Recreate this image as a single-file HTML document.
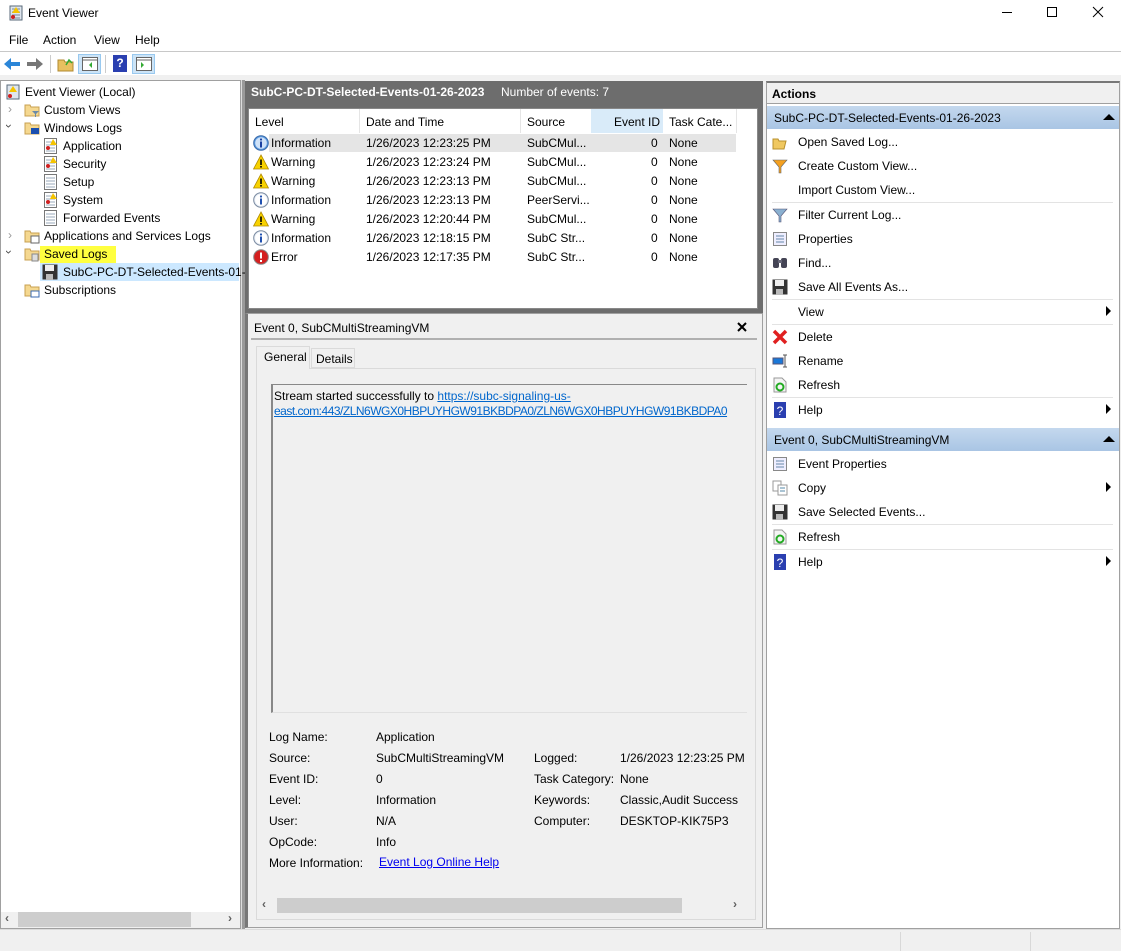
<!DOCTYPE html>
<html><head><meta charset="utf-8"><style>
*{margin:0;padding:0;box-sizing:border-box}
body{width:1121px;height:951px;position:relative;background:#f0f0f0;font-family:"Liberation Sans",Arial,sans-serif;font-size:12px;color:#000;overflow:hidden}
.a{position:absolute;white-space:nowrap}
.ic{position:absolute;width:16px;height:16px}
.sep{position:absolute;height:1px;background:#e3e3e3;left:772px;width:341px}
.arr{position:absolute;width:0;height:0;border-top:5px solid transparent;border-bottom:5px solid transparent;border-left:5px solid #000}
.lnk{color:#0066cc;text-decoration:underline}
</style></head><body>
<!-- title bar -->
<div class="a" style="left:0;top:0;width:1121px;height:51px;background:#fff"></div>
<svg class="ic" style="left:8px;top:5px" viewBox="0 0 16 16"><rect x="2" y="1" width="12" height="14" fill="#dfe6ee" stroke="#5a6a7a"/><path d="M4 4h8M4 7h8M4 10h8M4 13h8" stroke="#7a8a9a"/><path d="M8 2l4 6H4z" fill="#f5c400"/><circle cx="5" cy="12" r="2" fill="#d02020"/></svg>
<div class="a" style="left:28px;top:6px;font-size:12px">Event Viewer</div>
<div class="a" style="left:1002px;top:12px;width:10px;height:1px;background:#000"></div>
<div class="a" style="left:1047px;top:7px;width:10px;height:10px;border:1px solid #000"></div>
<svg class="a" style="left:1092px;top:6px" width="12" height="12"><path d="M1 1L11 11M11 1L1 11" stroke="#000"/></svg>
<div class="a" style="left:9px;top:33px">File</div>
<div class="a" style="left:43px;top:33px">Action</div>
<div class="a" style="left:94px;top:33px">View</div>
<div class="a" style="left:135px;top:33px">Help</div>
<div class="a" style="left:0;top:51px;width:1121px;height:1px;background:#c8c8c8"></div>
<!-- toolbar -->
<div class="a" style="left:0;top:52px;width:1121px;height:23px;background:#fff"></div>
<svg class="a" style="left:3px;top:56px" width="18" height="16"><path d="M1 8l7-6v4h9v4H8v4z" fill="#2b86d8"/></svg>
<svg class="a" style="left:26px;top:56px" width="18" height="16"><path d="M17 8l-7-6v4H1v4h9v4z" fill="#777"/></svg>
<div class="a" style="left:50px;top:55px;width:1px;height:18px;background:#ccc"></div>
<svg class="a" style="left:57px;top:56px" width="17" height="16"><path d="M1 4h6l1 2h8v9H1z" fill="#e8c060" stroke="#b08a30"/><path d="M9 9l3-5 3 3" stroke="#3a3" fill="none" stroke-width="1.5"/></svg>
<div class="a" style="left:78px;top:54px;width:23px;height:20px;background:#cce4f7;border:1px solid #99c9ef"></div>
<svg class="a" style="left:82px;top:57px" width="16" height="14"><rect x="0.5" y="0.5" width="15" height="13" fill="#fff" stroke="#666"/><path d="M1 3h14" stroke="#666"/><path d="M10 5l-3 3 3 3z" fill="#3a3"/></svg>
<div class="a" style="left:105px;top:55px;width:1px;height:18px;background:#ccc"></div>
<div class="a" style="left:113px;top:55px;width:14px;height:17px;background:#2a3fb0;color:#fff;font-weight:bold;text-align:center;line-height:17px">?</div>
<div class="a" style="left:132px;top:54px;width:23px;height:20px;background:#cce4f7;border:1px solid #99c9ef"></div>
<svg class="a" style="left:136px;top:57px" width="16" height="14"><rect x="0.5" y="0.5" width="15" height="13" fill="#fff" stroke="#666"/><path d="M1 3h14" stroke="#666"/><path d="M5 5l3 3-3 3z" fill="#3a3"/></svg>

<!-- left panel -->
<div class="a" style="left:0;top:80px;width:241px;height:849px;background:#fff;border:1px solid #a0a0a0"></div>
<div class="a" style="left:1px;top:912px;width:239px;height:16px;background:#f0f0f0"></div>
<div class="a" style="left:18px;top:912px;width:173px;height:15px;background:#cdcdcd"></div>
<div class="a" style="left:5px;top:911px;color:#606060;font-weight:bold">‹</div>
<div class="a" style="left:228px;top:911px;color:#606060;font-weight:bold">›</div>
<div class="a" style="left:241px;top:80px;width:4px;height:849px;background:#9a9a9a;border-left:1px solid #ddd"></div>

<svg class="ic" style="left:5px;top:84px" viewBox="0 0 16 16"><rect x="2" y="1" width="12" height="14" fill="#dfe6ee" stroke="#5a6a7a"/><path d="M8 2l4 6H4z" fill="#f5c400"/><circle cx="5" cy="12" r="2" fill="#d02020"/></svg>
<div class="a" style="left:25px;top:85px">Event Viewer (Local)</div>
<div class="a" style="left:8px;top:102px;color:#999">›</div>
<div class="a" style="left:7px;top:119px;color:#444;transform:rotate(90deg)">›</div>
<div class="a" style="left:8px;top:228px;color:#999">›</div>
<div class="a" style="left:7px;top:245px;color:#444;transform:rotate(90deg)">›</div>
<svg class="ic" style="left:24px;top:102px" viewBox="0 0 16 16"><path d="M1 3h5l1 2h8v9H1z" fill="#f5d890" stroke="#c8a050"/><path d="M8 9h7l-3 3v3h-1v-3z" fill="#6a8aa8"/></svg>
<svg class="ic" style="left:24px;top:120px" viewBox="0 0 16 16"><path d="M1 3h5l1 2h8v9H1z" fill="#f5d890" stroke="#c8a050"/><rect x="7" y="8" width="8" height="6" fill="#1a4fb0"/></svg>
<svg class="ic" style="left:24px;top:228px" viewBox="0 0 16 16"><path d="M1 3h5l1 2h8v9H1z" fill="#f5d890" stroke="#c8a050"/><rect x="7" y="8" width="8" height="7" fill="#fff" stroke="#666"/></svg>
<svg class="ic" style="left:24px;top:246px" viewBox="0 0 16 16"><path d="M1 3h5l1 2h8v9H1z" fill="#f5d890" stroke="#c8a050"/><rect x="8" y="8" width="6" height="7" fill="#ddd" stroke="#888"/></svg>
<svg class="ic" style="left:24px;top:282px" viewBox="0 0 16 16"><path d="M1 3h5l1 2h8v9H1z" fill="#f5d890" stroke="#c8a050"/><rect x="7" y="9" width="8" height="6" fill="#fff" stroke="#3a6ab0"/></svg>
<div class="a" style="left:44px;top:103px">Custom Views</div>
<div class="a" style="left:44px;top:121px">Windows Logs</div>
<svg class="ic" style="left:43px;top:138px" viewBox="0 0 16 16"><rect x="1.5" y="0.5" width="12" height="15" fill="#fff" stroke="#777"/><path d="M3 4h9M3 7h9M3 10h9M3 13h9" stroke="#9ab"/><path d="M10 1l4 6H7z" fill="#f5c400"/><circle cx="5" cy="10" r="2" fill="#d02020"/></svg>
<div class="a" style="left:63px;top:139px">Application</div>
<svg class="ic" style="left:43px;top:156px" viewBox="0 0 16 16"><rect x="1.5" y="0.5" width="12" height="15" fill="#fff" stroke="#777"/><path d="M3 4h9M3 7h9M3 10h9M3 13h9" stroke="#9ab"/><path d="M10 1l4 6H7z" fill="#f5c400"/><circle cx="5" cy="10" r="2" fill="#d02020"/></svg>
<div class="a" style="left:63px;top:157px">Security</div>
<svg class="ic" style="left:43px;top:174px" viewBox="0 0 16 16"><rect x="1.5" y="0.5" width="12" height="15" fill="#fff" stroke="#777"/><path d="M3 4h9M3 7h9M3 10h9M3 13h9" stroke="#9ab"/></svg>
<div class="a" style="left:63px;top:175px">Setup</div>
<svg class="ic" style="left:43px;top:192px" viewBox="0 0 16 16"><rect x="1.5" y="0.5" width="12" height="15" fill="#fff" stroke="#777"/><path d="M3 4h9M3 7h9M3 10h9M3 13h9" stroke="#9ab"/><path d="M10 1l4 6H7z" fill="#f5c400"/><circle cx="5" cy="10" r="2" fill="#d02020"/></svg>
<div class="a" style="left:63px;top:193px">System</div>
<svg class="ic" style="left:43px;top:210px" viewBox="0 0 16 16"><rect x="1.5" y="0.5" width="12" height="15" fill="#fff" stroke="#777"/><path d="M3 4h9M3 7h9M3 10h9M3 13h9" stroke="#9ab"/></svg>
<div class="a" style="left:63px;top:211px">Forwarded Events</div>
<div class="a" style="left:44px;top:229px">Applications and Services Logs</div>
<div class="a" style="left:40px;top:246px;width:76px;height:17px;background:#ffff40"></div>
<div class="a" style="left:44px;top:247px">Saved Logs</div>
<div class="a" style="left:40px;top:263px;width:199px;height:18px;background:#cce8ff"></div>
<svg class="ic" style="left:42px;top:264px" viewBox="0 0 16 16"><rect x="0.5" y="0.5" width="15" height="15" fill="#333"/><rect x="3" y="1" width="9" height="6" fill="#eee"/><rect x="4" y="10" width="7" height="6" fill="#bbb"/></svg>
<div class="a" style="left:63px;top:265px">SubC-PC-DT-Selected-Events-01-</div>
<div class="a" style="left:44px;top:283px">Subscriptions</div>

<!-- middle -->
<div class="a" style="left:245px;top:80px;width:518px;height:849px;background:#f0f0f0"></div>
<div class="a" style="left:245px;top:81px;width:518px;height:232px;background:#6d6d6d"></div>
<div class="a" style="left:251px;top:85px;color:#fff;font-weight:bold">SubC-PC-DT-Selected-Events-01-26-2023</div>
<div class="a" style="left:501px;top:85px;color:#fff">Number of events: 7</div>
<div class="a" style="left:248px;top:108px;width:510px;height:201px;background:#fff;border:1px solid #888"></div>
<div class="a" style="left:249px;top:109px;width:487px;height:24px;background:#fff"></div>
<div class="a" style="left:359px;top:109px;width:1px;height:24px;background:#e5e5e5"></div>
<div class="a" style="left:520px;top:109px;width:1px;height:24px;background:#e5e5e5"></div>
<div class="a" style="left:591px;top:109px;width:72px;height:24px;background:#d9ebf9"></div>
<div class="a" style="left:736px;top:109px;width:1px;height:24px;background:#e5e5e5"></div>
<div class="a" style="left:255px;top:115px">Level</div>
<div class="a" style="left:366px;top:115px">Date and Time</div>
<div class="a" style="left:527px;top:115px">Source</div>
<div class="a" style="left:614px;top:115px">Event ID</div>
<div class="a" style="left:669px;top:115px">Task Cate...</div>
<div class="a" style="left:269px;top:134px;width:467px;height:18px;background:#e5e5e5"></div>

<svg width="0" height="0" style="position:absolute"><defs>
<symbol id="inf" viewBox="0 0 16 16"><circle cx="8" cy="8" r="7.3" fill="#e8eef6" stroke="#7a8aa0"/><circle cx="8" cy="8" r="5.8" fill="#fff"/><rect x="7" y="6.5" width="2" height="6" fill="#2050b0"/><circle cx="8" cy="4.5" r="1.1" fill="#2050b0"/></symbol>
<symbol id="inf1" viewBox="0 0 16 16"><circle cx="8" cy="8" r="7.3" fill="#5a9ae0" stroke="#3a6aa8"/><circle cx="8" cy="8" r="5.8" fill="#cfe2f8"/><rect x="7" y="6.5" width="2" height="6" fill="#1a40a0"/><circle cx="8" cy="4.5" r="1.1" fill="#1a40a0"/></symbol>
<symbol id="wrn" viewBox="0 0 16 16"><path d="M8 1L15.5 15H0.5z" fill="#f8d200" stroke="#b08a00" stroke-width="0.8"/><rect x="7.2" y="5.5" width="1.6" height="5.5" fill="#000"/><rect x="7.2" y="12" width="1.6" height="1.6" fill="#000"/></symbol>
<symbol id="err" viewBox="0 0 16 16"><circle cx="8" cy="8" r="7.3" fill="#d42020" stroke="#888"/><rect x="7" y="3.5" width="2" height="6" fill="#fff"/><rect x="7" y="11" width="2" height="2" fill="#fff"/></symbol>
</defs></svg>
<svg class="ic" style="left:253px;top:135px"><use href="#inf1"/></svg>
<svg class="ic" style="left:253px;top:154px"><use href="#wrn"/></svg>
<svg class="ic" style="left:253px;top:173px"><use href="#wrn"/></svg>
<svg class="ic" style="left:253px;top:192px"><use href="#inf"/></svg>
<svg class="ic" style="left:253px;top:211px"><use href="#wrn"/></svg>
<svg class="ic" style="left:253px;top:230px"><use href="#inf"/></svg>
<svg class="ic" style="left:253px;top:249px"><use href="#err"/></svg>
<div class="a" style="left:271px;top:134px;line-height:19px">Information<br>Warning<br>Warning<br>Information<br>Warning<br>Information<br>Error</div>
<div class="a" style="left:366px;top:134px;line-height:19px">1/26/2023 12:23:25 PM<br>1/26/2023 12:23:24 PM<br>1/26/2023 12:23:13 PM<br>1/26/2023 12:23:13 PM<br>1/26/2023 12:20:44 PM<br>1/26/2023 12:18:15 PM<br>1/26/2023 12:17:35 PM</div>
<div class="a" style="left:527px;top:134px;line-height:19px">SubCMul...<br>SubCMul...<br>SubCMul...<br>PeerServi...<br>SubCMul...<br>SubC Str...<br>SubC Str...</div>
<div class="a" style="left:651px;top:134px;line-height:19px">0<br>0<br>0<br>0<br>0<br>0<br>0</div>
<div class="a" style="left:669px;top:134px;line-height:19px">None<br>None<br>None<br>None<br>None<br>None<br>None</div>

<div class="a" style="left:245px;top:313px;width:518px;height:615px;background:#f0f0f0;border:1px solid #a0a0a0;border-left:3px solid #777"></div>
<div class="a" style="left:254px;top:321px">Event 0, SubCMultiStreamingVM</div>
<svg class="a" style="left:737px;top:322px" width="10" height="10"><path d="M1 1L9 9M9 1L1 9" stroke="#000" stroke-width="2"/></svg>
<div class="a" style="left:251px;top:338px;width:506px;height:2px;background:#b0b0b0"></div>
<div class="a" style="left:256px;top:368px;width:500px;height:552px;background:#f0f0f0;border:1px solid #dadada"></div>
<div class="a" style="left:256px;top:346px;width:54px;height:23px;background:#f0f0f0;border:1px solid #dadada;border-bottom:none"></div>
<div class="a" style="left:311px;top:348px;width:44px;height:20px;background:#f0f0f0;border:1px solid #dadada"></div>
<div class="a" style="left:264px;top:350px">General</div>
<div class="a" style="left:316px;top:352px">Details</div>
<div class="a" style="left:271px;top:384px;width:476px;height:329px;border-top:1px solid #888;border-left:2px solid #888;border-bottom:1px solid #e0e0e0"></div>
<div class="a" style="left:274px;top:389px;line-height:15px">Stream started successfully to <span class="lnk">https://subc-signaling-us-</span><br><span class="lnk" style="letter-spacing:-0.5px">east.com:443/ZLN6WGX0HBPUYHGW91BKBDPA0/ZLN6WGX0HBPUYHGW91BKBDPA0</span></div>
<div class="a" style="left:269px;top:727px;line-height:21px">Log Name:<br>Source:<br>Event ID:<br>Level:<br>User:<br>OpCode:<br>More Information:</div>
<div class="a" style="left:376px;top:727px;line-height:21px">Application<br>SubCMultiStreamingVM<br>0<br>Information<br>N/A<br>Info</div>
<div class="a" style="left:379px;top:855px;color:#0000ee;text-decoration:underline">Event Log Online Help</div>
<div class="a" style="left:534px;top:748px;line-height:21px">Logged:<br>Task Category:<br>Keywords:<br>Computer:</div>
<div class="a" style="left:620px;top:748px;line-height:21px">1/26/2023 12:23:25 PM<br>None<br>Classic,Audit Success<br>DESKTOP-KIK75P3</div>
<div class="a" style="left:257px;top:897px;width:498px;height:17px;background:#f0f0f0"></div>
<div class="a" style="left:277px;top:898px;width:405px;height:15px;background:#cdcdcd"></div>
<div class="a" style="left:262px;top:897px;color:#606060;font-weight:bold">‹</div>
<div class="a" style="left:733px;top:897px;color:#606060;font-weight:bold">›</div>

<!-- right -->
<div class="a" style="left:763px;top:80px;width:3px;height:849px;background:#f0f0f0"></div>
<div class="a" style="left:766px;top:81px;width:354px;height:848px;background:#fff;border:1px solid #a0a0a0;border-top:2px solid #777"></div>
<div class="a" style="left:767px;top:83px;width:352px;height:21px;background:#f0f0f0;border-bottom:1px solid #a0a0a0"></div>
<div class="a" style="left:772px;top:87px;font-weight:bold">Actions</div>
<div class="a" style="left:767px;top:106px;width:352px;height:23px;background:linear-gradient(#c4d8ee,#a9c5e4)"></div>
<div class="a" style="left:774px;top:111px">SubC-PC-DT-Selected-Events-01-26-2023</div>
<div class="a" style="left:1103px;top:114px;border-left:6px solid transparent;border-right:6px solid transparent;border-bottom:6px solid #000"></div>
<div class="a" style="left:767px;top:428px;width:352px;height:23px;background:linear-gradient(#c4d8ee,#a9c5e4)"></div>
<div class="a" style="left:774px;top:433px">Event 0, SubCMultiStreamingVM</div>
<div class="a" style="left:1103px;top:436px;border-left:6px solid transparent;border-right:6px solid transparent;border-bottom:6px solid #000"></div>

<div class="a" style="left:798px;top:135px">Open Saved Log...</div>
<div class="a" style="left:798px;top:159px">Create Custom View...</div>
<div class="a" style="left:798px;top:183px">Import Custom View...</div>
<div class="sep" style="top:202px"></div>
<div class="a" style="left:798px;top:208px">Filter Current Log...</div>
<div class="a" style="left:798px;top:232px">Properties</div>
<div class="a" style="left:798px;top:256px">Find...</div>
<div class="a" style="left:798px;top:280px">Save All Events As...</div>
<div class="sep" style="top:299px"></div>
<div class="a" style="left:798px;top:305px">View</div>
<div class="arr" style="left:1106px;top:306px"></div>
<div class="sep" style="top:324px"></div>
<div class="a" style="left:798px;top:330px">Delete</div>
<div class="a" style="left:798px;top:354px">Rename</div>
<div class="a" style="left:798px;top:378px">Refresh</div>
<div class="sep" style="top:397px"></div>
<div class="a" style="left:798px;top:403px">Help</div>
<div class="arr" style="left:1106px;top:404px"></div>
<div class="a" style="left:798px;top:457px">Event Properties</div>
<div class="a" style="left:798px;top:481px">Copy</div>
<div class="arr" style="left:1106px;top:482px"></div>
<div class="a" style="left:798px;top:505px">Save Selected Events...</div>
<div class="sep" style="top:524px"></div>
<div class="a" style="left:798px;top:530px">Refresh</div>
<div class="sep" style="top:549px"></div>
<div class="a" style="left:798px;top:555px">Help</div>
<div class="arr" style="left:1106px;top:556px"></div>
<svg class="ic" style="left:772px;top:134px" viewBox="0 0 16 16"><path d="M1 5h5l1 2h7l-2 8H1z" fill="#f0c860" stroke="#b8902c"/></svg>
<svg class="ic" style="left:772px;top:158px" viewBox="0 0 16 16"><path d="M1 2h14L9 9v6H7V9z" fill="#f4a020" stroke="#666" stroke-width="0.6"/></svg>
<svg class="ic" style="left:772px;top:207px" viewBox="0 0 16 16"><path d="M1 2h14L9 9v6H7V9z" fill="#8ab0d0" stroke="#557" stroke-width="0.6"/></svg>
<svg class="ic" style="left:772px;top:231px" viewBox="0 0 16 16"><rect x="1.5" y="1.5" width="13" height="13" fill="#eef" stroke="#888"/><path d="M4 5h8M4 8h8M4 11h8" stroke="#68a"/></svg>
<svg class="ic" style="left:772px;top:255px" viewBox="0 0 16 16"><rect x="1" y="3" width="6" height="10" rx="2" fill="#445"/><rect x="9" y="3" width="6" height="10" rx="2" fill="#445"/><rect x="6" y="5" width="4" height="3" fill="#667"/></svg>
<svg class="ic" style="left:772px;top:279px" viewBox="0 0 16 16"><rect x="0.5" y="0.5" width="15" height="15" fill="#333"/><rect x="3" y="1" width="9" height="6" fill="#eee"/><rect x="4" y="10" width="7" height="6" fill="#bbb"/></svg>
<svg class="ic" style="left:772px;top:329px" viewBox="0 0 16 16"><path d="M2 2L14 14M14 2L2 14" stroke="#e02020" stroke-width="3.5"/></svg>
<svg class="ic" style="left:772px;top:353px" viewBox="0 0 16 16"><rect x="1" y="5" width="10" height="6" fill="#1a78d8" stroke="#557"/><path d="M13 2v12M11 2h4M11 14h4" stroke="#555"/></svg>
<svg class="ic" style="left:772px;top:377px" viewBox="0 0 16 16"><path d="M2 1h8l4 4v10H2z" fill="#f4f4f4" stroke="#999"/><circle cx="8" cy="10" r="3.5" fill="none" stroke="#2a2" stroke-width="2"/></svg>
<svg class="ic" style="left:772px;top:402px" viewBox="0 0 16 16"><rect x="2" y="0" width="12" height="16" fill="#2a3fb0"/><text x="8" y="13" font-size="12" fill="#fff" text-anchor="middle" font-family="Liberation Sans">?</text></svg>
<svg class="ic" style="left:772px;top:456px" viewBox="0 0 16 16"><rect x="1.5" y="1.5" width="13" height="13" fill="#eef" stroke="#888"/><path d="M4 5h8M4 8h8M4 11h8" stroke="#68a"/></svg>
<svg class="ic" style="left:772px;top:480px" viewBox="0 0 16 16"><rect x="1" y="1" width="8" height="10" fill="#fff" stroke="#999"/><rect x="6" y="5" width="9" height="10" fill="#fff" stroke="#999"/><path d="M8 8h5M8 11h5" stroke="#58a"/></svg>
<svg class="ic" style="left:772px;top:504px" viewBox="0 0 16 16"><rect x="0.5" y="0.5" width="15" height="15" fill="#333"/><rect x="3" y="1" width="9" height="6" fill="#eee"/><rect x="4" y="10" width="7" height="6" fill="#bbb"/></svg>
<svg class="ic" style="left:772px;top:529px" viewBox="0 0 16 16"><path d="M2 1h8l4 4v10H2z" fill="#f4f4f4" stroke="#999"/><circle cx="8" cy="10" r="3.5" fill="none" stroke="#2a2" stroke-width="2"/></svg>
<svg class="ic" style="left:772px;top:554px" viewBox="0 0 16 16"><rect x="2" y="0" width="12" height="16" fill="#2a3fb0"/><text x="8" y="13" font-size="12" fill="#fff" text-anchor="middle" font-family="Liberation Sans">?</text></svg>

<!-- status bar -->
<div class="a" style="left:0;top:929px;width:1121px;height:22px;background:#f0f0f0;border-top:1px solid #dcdcdc"></div>
<div class="a" style="left:900px;top:932px;width:1px;height:19px;background:#d8d8d8"></div>
<div class="a" style="left:1030px;top:932px;width:1px;height:19px;background:#d8d8d8"></div>
</body></html>
